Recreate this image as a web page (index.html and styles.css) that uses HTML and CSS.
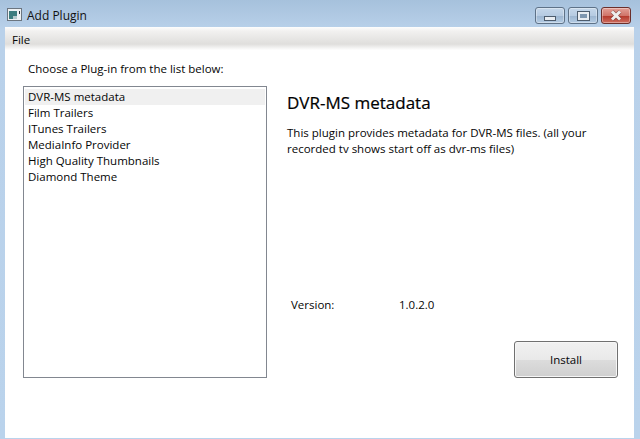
FILE: index.html
```html
<!DOCTYPE html>
<html lang="en">
<head>
<meta charset="utf-8">
<title>Add Plugin</title>
<link rel="stylesheet" href="styles.css">
</head>
<body>
<div class="window">
  <header class="titlebar">
    <svg class="app-icon" width="15" height="13" viewBox="0 0 15 13">
      <rect x="0.5" y="0.5" width="14" height="12" fill="#eef1f3" stroke="#6b7580"/>
      <rect x="2" y="3" width="8" height="8" fill="#3d7c7e"/>
      <rect x="6" y="8" width="4" height="3" fill="#b5c9cc"/>
      <rect x="12" y="3" width="1" height="3" fill="#2a3038"/>
    </svg>
    <span class="title">Add Plugin</span>
    <div class="controls">
      <div class="ctl ctl-min"><span class="glyph-min"></span></div>
      <div class="ctl ctl-max"><span class="glyph-max"></span></div>
      <div class="ctl ctl-close">
        <svg width="14" height="11" viewBox="0 0 14 11"><path d="M3 1.5 L11 9.5 M11 1.5 L3 9.5" stroke="#5a2a28" stroke-width="4.2" fill="none" opacity=".55"/><path d="M3 1.5 L11 9.5 M11 1.5 L3 9.5" stroke="#eeeeee" stroke-width="3" fill="none"/></svg>
      </div>
    </div>
  </header>
  <div class="client">
    <nav class="menubar"><span>File</span></nav>
    <main class="content">
      <section class="left">
        <p class="prompt">Choose a Plug-in from the list below:</p>
        <ul class="list">
          <li class="selected">DVR-MS metadata</li>
          <li>Film Trailers</li>
          <li>ITunes Trailers</li>
          <li>MediaInfo Provider</li>
          <li>High Quality Thumbnails</li>
          <li>Diamond Theme</li>
        </ul>
      </section>
      <section class="detail">
        <h1>DVR-MS metadata</h1>
        <p class="desc">This plugin provides metadata for DVR-MS files. (all your recorded tv shows start off as dvr-ms files)</p>
        <div class="version"><span class="version-label">Version:</span><span>1.0.2.0</span></div>
        <div class="actions"><button class="install">Install</button></div>
      </section>
    </main>
  </div>
</div>
</body>
</html>
```
FILE: styles.css
```css
* { box-sizing: border-box; }
html, body { margin: 0; padding: 0; }
body {
  width: 640px;
  height: 439px;
  overflow: hidden;
  font-family: "Open Sans", "Noto Sans", sans-serif;
  font-size: 11.5px;
  color: #050505;
}
.window {
  width: 640px;
  height: 439px;
  display: flex;
  flex-direction: column;
  padding: 0 6px 1px 5px;
  background: linear-gradient(180deg, #a6c1dc 0, #b9d1ea 30px, #bad3ec 100%);
}
.titlebar {
  height: 27px;
  flex: none;
  display: flex;
  align-items: center;
  margin: 0 3px 0 2px;
}
.app-icon { margin-top: 2px; }
.title { margin-left: 5px; font-size: 12px; color: #111; margin-top: 4px; }
.controls { margin-left: auto; display: flex; gap: 3px; align-self: flex-start; margin-top: 7px; }
.ctl {
  width: 30px;
  height: 17px;
  display: flex;
  align-items: center;
  justify-content: center;
  border: 1px solid #5e7288;
  border-radius: 3px;
  box-shadow: inset 0 0 0 1px rgba(255,255,255,.35);
  background: linear-gradient(180deg, #c5d7ea 0, #b6cbe2 50%, #9cb5d0 52%, #b4cce4 100%);
}
.ctl-close {
  border-color: #6b2f2b;
  background: linear-gradient(180deg, #e3a097 0, #d0756a 50%, #b5392c 54%, #cf6e60 100%);
}
.glyph-min {
  width: 12px;
  height: 5px;
  margin-top: 5px;
  background: #e9edf2;
  border: 1px solid #4d5c6d;
}
.glyph-max {
  width: 11px;
  height: 8px;
  border: 2px solid #e9edf2;
  outline: 1px solid #4d5c6d;
  background: #7f97b0;
}
.client {
  flex: 1;
  display: flex;
  flex-direction: column;
  background: #fff;
  min-height: 0;
}
.menubar {
  height: 23px;
  flex: none;
  padding: 5px 0 0 7px;
  background: linear-gradient(180deg, #fdfdfd 0, #f2f1f0 4px, #e2e1df 15px, #dfdedc 17px, #fefefe 23px);
}
.content {
  flex: 1;
  display: flex;
  min-height: 0;
  padding: 0 16px 0 18px;
}
.left { width: 244px; flex: none; display: flex; flex-direction: column; }
.prompt { margin: 10px 0 0 5px; height: 26px; line-height: 17px; }
.list {
  list-style: none;
  margin: 0;
  padding: 2px 1px 1px;
  height: 292px;
  border: 1px solid #828790;
}
.list li { height: 16px; line-height: 16px; padding-left: 3px; }
.list .selected { background: #f0f0f0; }
.detail { flex: 1; margin-left: 20px; display: flex; flex-direction: column; }
.detail h1 {
  margin: 42px 0 0;
  font-size: 17px;
  line-height: 22px;
  font-weight: 400;
  color: #000;
  -webkit-text-stroke: 0.2px #000;
}
.desc { margin: 11px 0 0; line-height: 16px; width: 310px; }
.version { display: flex; margin: 140px 0 0 4px; line-height: 16px; }
.version-label { width: 108px; }
.actions { display: flex; justify-content: flex-end; margin-top: 28px; }
.install {
  width: 104px;
  height: 37px;
  padding: 0;
  font: inherit;
  color: #050505;
  border: 1px solid #707070;
  border-radius: 3px;
  box-shadow: inset 0 0 0 1px #f6f6f6;
  background: linear-gradient(180deg, #f1f1f1 0, #e9e9e9 50%, #dcdcdc 52%, #cfcfcf 100%);
}
```
